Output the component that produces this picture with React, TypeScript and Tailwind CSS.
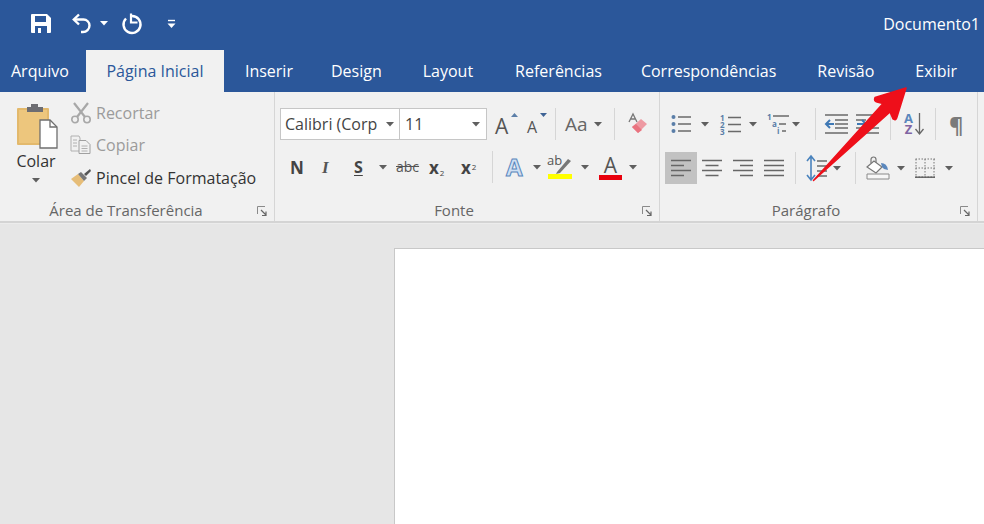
import type { ReactNode } from 'react';

const tabs = [
  { label: 'Inserir', ml: 'ml-[21px]' },
  { label: 'Design', ml: 'ml-[38px]' },
  { label: 'Layout', ml: 'ml-[41px]' },
  { label: 'Referências', ml: 'ml-[42px]' },
  { label: 'Correspondências', ml: 'ml-[39px]' },
  { label: 'Revisão', ml: 'ml-[41px]' },
  { label: 'Exibir', ml: 'ml-[41px]' },
];

function Caret({ className = '' }: { className?: string }) {
  return (
    <svg width="8" height="5" viewBox="0 0 8 5" className={`shrink-0 ${className}`}>
      <path d="M0 0h8L4 4.500z" fill="#5f5f5f" />
    </svg>
  );
}

function Sep({ className = '' }: { className?: string }) {
  return <div className={`w-px h-[32px] bg-[#d6d6d6] shrink-0 ${className}`} />;
}

function Launcher() {
  return (
    <svg width="11" height="11" viewBox="0 0 11 11" className="absolute right-[6px] bottom-[4px]">
      <path d="M.5 8V.5H8" fill="none" stroke="#8a8a8a" />
      <path d="M4 4l5 5M9 5.500V9.500H5" fill="none" stroke="#666" strokeWidth="1.200" />
    </svg>
  );
}

function Icon({ w, h, children, className = '' }: { w: number; h: number; children: ReactNode; className?: string }) {
  return (
    <svg width={w} height={h} viewBox={`0 0 ${w} ${h}`} fill="none" className={`shrink-0 overflow-visible ${className}`}>
      {children}
    </svg>
  );
}

function AlignIcon({ kind }: { kind: 'left' | 'center' | 'right' | 'justify' }) {
  const long = 20;
  const short = 13;
  const d = (i: number, len: number) => {
    const y = 2.5 + i * 5;
    const x = kind === 'left' ? 0 : kind === 'right' ? long - len : (long - len) / 2;
    return <path key={i} d={`M${x} ${y}h${len}`} stroke="#666" strokeWidth="1.500" />;
  };
  return (
    <Icon w={20} h={20}>
      {[0, 1, 2, 3].map(i => d(i, kind === 'justify' || i % 2 === 0 ? long : short))}
    </Icon>
  );
}

export default function App() {
  return (
    <div className="relative w-[984px] h-[524px] overflow-hidden flex flex-col bg-[#e6e6e6] font-['Open_Sans','Noto_Sans',sans-serif]">
      {/* barra de titulo */}
      <div className="h-[50px] pb-[3px] bg-[#2b579a] flex items-center text-white shrink-0">
        <Icon w={22} h={21} className="ml-[30px]">
          <path d="M1 2a1 1 0 0 1 1-1h15l4 4v14a1 1 0 0 1-1 1H2a1 1 0 0 1-1-1z" fill="#fff" />
          <path d="M5 3h11v6H5z" fill="#2b579a" />
          <path d="M5 13h12v7H5z" fill="#2b579a" />
          <path d="M8 15h3v5H8z" fill="#fff" />
        </Icon>
        <Icon w={21} h={21} className="ml-[20px]">
          <path d="M7 1.500L1.800 6.500l5.200 5" stroke="#fff" strokeWidth="2.400" />
          <path d="M2.500 6.500h9a6 6 0 0 1 6 6v0a6.500 6.500 0 0 1-6.500 6.500H9" stroke="#fff" strokeWidth="2.400" />
        </Icon>
        <Caret className="ml-[7px] [&>path]:fill-white" />
        <Icon w={20} h={21} className="ml-[13px]">
          <path d="M5 5.500A8.500 8.500 0 1 0 11 3" stroke="#fff" strokeWidth="2.400" />
          <path d="M10 0.500v9h6.500" stroke="#fff" strokeWidth="2.200" />
        </Icon>
        <Icon w={9} h={10} className="ml-[26px]">
          <path d="M1 1.500h7" stroke="#fff" strokeWidth="1.400" />
          <path d="M.5 4.500h8L4.500 9z" fill="#fff" />
        </Icon>
        <span className="ml-auto mr-[4px] text-[16px] leading-none">Documento1</span>
      </div>

      {/* abas */}
      <div className="h-[42px] bg-[#2b579a] flex items-end text-white text-[16px] shrink-0">
        <span className="ml-[11px] h-[42px] leading-[42px]">Arquivo</span>
        <div className="ml-[17px] w-[138px] h-[42px] bg-[#f1f1f1] text-[#2b579a] flex items-center justify-center">Página Inicial</div>
        {tabs.map(t => (
          <span key={t.label} className={`${t.ml} h-[42px] leading-[42px] whitespace-nowrap`}>{t.label}</span>
        ))}
      </div>

      {/* faixa de opcoes */}
      <div className="h-[131px] bg-[#f1f1f1] border-b-2 border-[#d4d4d4] flex shrink-0 text-[#444]">
        {/* area de transferencia */}
        <div className="relative w-[275px] border-r border-[#d6d6d6] shrink-0 flex flex-col">
          <div className="flex h-[107px]">
            <div className="ml-[16px] w-[42px] flex flex-col items-center pt-[11px]">
              <Icon w={42} h={44}>
                <path d="M2 6h30v35H2z" fill="#edc67d" stroke="#e3b96c" strokeWidth="2" strokeLinejoin="round" />
                <path d="M11 4h4V1h7v3h5v5H11z" fill="#6d6d72" />
                <path d="M24 17h10l7 7v21H24z" fill="#fff" stroke="#6f6f6f" strokeWidth="1.300" />
                <path d="M34 17v7h7" stroke="#6f6f6f" strokeWidth="1.300" />
              </Icon>
              <span className="mt-[4px] mr-[2px] text-[16px] leading-[20px] text-[#333]">Colar</span>
              <Caret className="mt-[7px] mr-[2px]" />
            </div>
            <div className="ml-[12px] flex flex-col pt-[5px] whitespace-nowrap text-[16px]">
              <div className="flex items-center h-[32px] text-[#9b9b9b]">
                <Icon w={22} h={22}>
                  <path d="M4 1l11 14M18 1L7 15" stroke="#a8a8a8" strokeWidth="2.200" />
                  <circle cx="5" cy="17.500" r="3.200" stroke="#a8a8a8" strokeWidth="1.600" />
                  <circle cx="17" cy="17.500" r="3.200" stroke="#a8a8a8" strokeWidth="1.600" />
                </Icon>
                <span className="ml-[4px]">Recortar</span>
              </div>
              <div className="flex items-center h-[32px] text-[#9b9b9b]">
                <Icon w={22} h={20}>
                  <path d="M1 1h8l1 2v13H1z" stroke="#b0b0b0" />
                  <path d="M9 5.500h7l4 4v9H9z" fill="#f1f1f1" stroke="#a0a0a0" />
                  <path d="M3 5h4M3 8h4M3 11h4M11.500 11h6M11.500 13.500h6M11.500 16h6" stroke="#b0b0b0" />
                </Icon>
                <span className="ml-[4px]">Copiar</span>
              </div>
              <div className="flex items-center h-[33px] text-[#333]">
                <Icon w={22} h={20}>
                  <path d="M1 11l7-5 6 7-5 6z" fill="#e6bd78" />
                  <path d="M8 6l3-2 6 6-3 3z" fill="#777" />
                  <path d="M14 6l6-5 1 2-5 5z" fill="#555" />
                </Icon>
                <span className="ml-[4px]">Pincel de Formatação</span>
              </div>
            </div>
          </div>
          <div className="text-center text-[15px] leading-[22px] text-[#666] pr-[22px]">Área de Transferência</div>
          <Launcher />
        </div>

        {/* fonte */}
        <div className="relative w-[385px] border-r border-[#d6d6d6] shrink-0 flex flex-col">
          <div className="h-[107px] flex flex-col">
            <div className="flex items-center mt-[16px] h-[32px]">
              <div className="ml-[5px] w-[120px] h-[32px] bg-white border border-[#c6c6c6] flex items-center pl-[4px] text-[16px] text-[#444] whitespace-nowrap">
                Calibri (Corp
                <Caret className="ml-auto mr-[5px]" />
              </div>
              <div className="w-[87px] h-[32px] bg-white border border-l-0 border-[#c6c6c6] flex items-center pl-[5px] text-[16px] text-[#444]">
                11
                <Caret className="ml-auto mr-[6px]" />
              </div>
              <div className="ml-[8px] relative w-[20px] h-[26px] text-[21px] leading-[30px] text-[#555]">
                A
                <svg width="7" height="4" className="absolute right-[-3px] top-[2px]"><path d="M0 4l3.500-4L7 4z" fill="#5c7fa8" /></svg>
              </div>
              <div className="ml-[12px] relative w-[16px] h-[26px] text-[16px] leading-[32px] text-[#555]">
                A
                <svg width="7" height="4" className="absolute right-[-4px] top-[2px]"><path d="M0 0h7L3.500 4z" fill="#3f6496" /></svg>
              </div>
              <Sep className="ml-[12px]" />
              <span className="ml-[9px] w-[25px] text-[19px] text-[#666] leading-none">Aa</span>
              <Caret className="ml-[4px]" />
              <Sep className="ml-[12px]" />
              <Icon w={22} h={22} className="ml-[11px]">
                <path d="M3 9l4-8 4 8M4.500 6h5" stroke="#777" strokeWidth="1.300" />
                <path d="M6 14l9-8 6 5-9 9z" fill="#ee9aa3" />
                <path d="M6 14l4-3 6 6-4 3z" fill="#e9737f" />
              </Icon>
            </div>
            <div className="flex items-center mt-[11px] h-[32px] text-[#444]">
              <span className="ml-[15px] w-[13px] text-[17px] font-bold leading-none">N</span>
              <span className="ml-[19px] w-[10px] text-[17px] italic font-['Liberation_Serif',serif] font-bold leading-none text-[#555]">I</span>
              <span className="ml-[22px] w-[12px] text-[16px] font-bold leading-none underline underline-offset-2">S</span>
              <Caret className="ml-[13px]" />
              <span className="ml-[9px] w-[26px] text-[14px] leading-none line-through text-[#555]">abc</span>
              <span className="ml-[7px] w-[24px] text-[17px] font-bold leading-none">x<sub className="text-[8px] font-normal ml-[1px]">2</sub></span>
              <span className="ml-[8px] w-[22px] text-[17px] font-bold leading-none">x<sup className="text-[8px] font-normal ml-[1px]">2</sup></span>
              <Sep className="ml-[9px]" />
              <span className="ml-[13px] w-[21px] text-[24px] leading-none text-[#cfe0f3] font-bold [-webkit-text-stroke:1px_#5a87bd]">A</span>
              <Caret className="ml-[6px]" />
              <Icon w={26} h={26} className="ml-[6px]">
                <text x="0" y="11" fontSize="13" fill="#555" fontFamily="Open Sans">ab</text>
                <path d="M10 18l11-13 3 2-11 12-4 1z" fill="#777" />
                <path d="M1 20h24v5H1z" fill="#ffff00" />
              </Icon>
              <Caret className="ml-[8px]" />
              <div className="ml-[10px] w-[23px] flex flex-col items-center">
                <span className="text-[21px] leading-[20px] text-[#555]">A</span>
                <div className="w-[23px] h-[5px] bg-[#e8000d]" />
              </div>
              <Caret className="ml-[7px]" />
            </div>
          </div>
          <div className="text-center text-[15px] leading-[22px] text-[#666] pr-[26px]">Fonte</div>
          <Launcher />
        </div>

        {/* paragrafo */}
        <div className="relative w-[318px] border-r border-[#d6d6d6] shrink-0 flex flex-col">
          <div className="h-[107px] flex flex-col">
            <div className="flex items-center mt-[16px] h-[32px]">
              <Icon w={20} h={20} className="ml-[11px]">
                <circle cx="2.500" cy="3" r="2" fill="#5a7ea8" />
                <circle cx="2.500" cy="10" r="2" fill="#5a7ea8" />
                <circle cx="2.500" cy="17" r="2" fill="#5a7ea8" />
                <path d="M7 3h13M7 10h13M7 17h13" stroke="#6a6a6a" strokeWidth="1.500" />
              </Icon>
              <Caret className="ml-[10px]" />
              <Icon w={21} h={21} className="ml-[11px]">
                <text x="0" y="7" fontSize="8" fontWeight="700" fill="#5a7ea8" fontFamily="Open Sans">1</text>
                <text x="0" y="14" fontSize="8" fontWeight="700" fill="#5a7ea8" fontFamily="Open Sans">2</text>
                <text x="0" y="21" fontSize="8" fontWeight="700" fill="#5a7ea8" fontFamily="Open Sans">3</text>
                <path d="M8 3.500h13M8 10.500h13M8 17.500h13" stroke="#6a6a6a" strokeWidth="1.500" />
              </Icon>
              <Caret className="ml-[8px]" />
              <Icon w={24} h={22} className="ml-[10px]">
                <text x="0" y="7" fontSize="8" fontWeight="700" fill="#5a7ea8" fontFamily="Open Sans">1</text>
                <text x="5" y="14" fontSize="8" fontWeight="700" fill="#5a7ea8" fontFamily="Open Sans">a</text>
                <text x="10" y="21" fontSize="8" fontWeight="700" fill="#5a7ea8" fontFamily="Open Sans">i</text>
                <path d="M6 3h16M12 11h7M15 18h4" stroke="#6a6a6a" strokeWidth="1.500" />
              </Icon>
              <Caret className="ml-[1px] mt-[1px]" />
              <Sep className="ml-[15px]" />
              <Icon w={24} h={20} className="ml-[9px]">
                <path d="M0 1h23M10 6h13M10 10h13M10 14h13M0 19h23" stroke="#6a6a6a" strokeWidth="1.500" />
                <path d="M1 10h8M5 6l-4 4 4 4" stroke="#3f79b5" strokeWidth="2" />
              </Icon>
              <Icon w={24} h={20} className="ml-[7px]">
                <path d="M0 1h23M0 6h10M0 14h10M0 19h23M14 6h9M14 14h9" stroke="#6a6a6a" strokeWidth="1.500" />
                <path d="M1 10h9M6 6l4 4-4 4" stroke="#3f79b5" strokeWidth="2" />
              </Icon>
              <Sep className="ml-[10px]" />
              <div className="ml-[12px] w-[11px] flex flex-col text-[13px] leading-[11px] font-bold text-center">
                <span className="text-[#5a87bd]">A</span>
                <span className="text-[#8064a2]">Z</span>
              </div>
              <Icon w={9} h={22} className="ml-[1px]">
                <path d="M4.500 0v20M.5 16l4 5 4-5" stroke="#666" strokeWidth="1.300" />
              </Icon>
              <Sep className="ml-[11px]" />
              <span className="ml-[13px] w-[15px] text-[22px] leading-none text-[#7a7a7a] font-bold">¶</span>
            </div>
            <div className="flex items-center mt-[12px] h-[32px]">
              <div className="ml-[5px] w-[32px] h-[32px] bg-[#c2c2c2] flex items-center justify-center">
                <AlignIcon kind="left" />
              </div>
              <div className="w-[5px]" />
              <AlignIcon kind="center" />
              <div className="w-[11px]" />
              <AlignIcon kind="right" />
              <div className="w-[11px]" />
              <AlignIcon kind="justify" />
              <Sep className="ml-[11px]" />
              <Icon w={20} h={26} className="ml-[11px]">
                <path d="M4 2v22M0 6l4-5 4 5M0 20l4 5 4-5" stroke="#4a83bd" strokeWidth="1.600" />
                <path d="M10 6h10M10 11h10M10 16h10M10 21h10" stroke="#6a6a6a" strokeWidth="1.500" />
              </Icon>
              <Caret className="ml-[6px]" />
              <Sep className="ml-[14px]" />
              <Icon w={24} h={24} className="ml-[10px]">
                <path d="M5 7V3.500a2.500 2.500 0 0 1 5 0V7" stroke="#777" strokeWidth="1.200" />
                <path d="M1 11l7-6 8 6-6 6z" fill="#fff" stroke="#777" strokeWidth="1.200" />
                <path d="M15 7q6 0 7 7l-4-1-2-2z" fill="#5a87bd" />
                <path d="M1 18h22v5H1z" fill="#f7f7f7" stroke="#8a8a8a" />
              </Icon>
              <Caret className="ml-[7px]" />
              <Icon w={20} h={20} className="ml-[10px]">
                <path d="M.5 1H20M.5 10H20M.5 19H20M1 1v18M10 1v18M19 1v18" stroke="#777" strokeDasharray="1.500 1.500" />
                <path d="M0 19.200h20" stroke="#555" strokeWidth="1.300" />
              </Icon>
              <Caret className="ml-[10px]" />
            </div>
          </div>
          <div className="text-center text-[15px] leading-[22px] text-[#666] pr-[25px]">Parágrafo</div>
          <Launcher />
        </div>
      </div>

      {/* area do documento */}
      <div className="flex-1 pt-[24px] pl-[394px] border-t border-[#ececec]">
        <div className="h-full bg-white border-l border-t border-[#c8c8c8]" />
      </div>

      {/* seta vermelha da anotacao */}
      <svg width="984" height="524" className="absolute inset-0 pointer-events-none">
        <path
          d="M906 88L875 97.500Q873.500 101 877 102L883 103.500L813.500 180.500L890 112L893 119Q896 121 897 117Z"
          fill="#ee0f1a"
          stroke="#ee0f1a"
          strokeWidth="1.500"
          strokeLinejoin="round"
        />
      </svg>
    </div>
  );
}
